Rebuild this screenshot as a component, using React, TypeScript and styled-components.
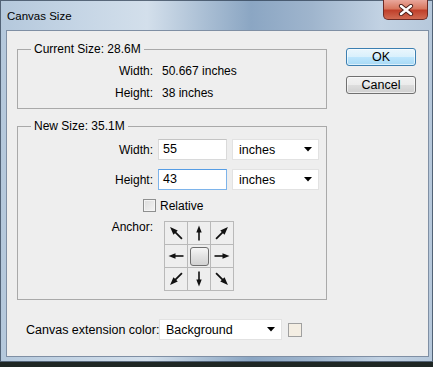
import * as React from 'react';
import styled, { createGlobalStyle } from 'styled-components';

const GlobalStyle = createGlobalStyle`
  html, body {
    margin: 0;
    padding: 0;
    background: #1f2724;
  }
  body {
    font-family: 'Liberation Sans', Arial, sans-serif;
    font-size: 12px;
    color: #000000;
  }
`;

const Window = styled.div`
  width: 433px;
  height: 362px;
  box-sizing: border-box;
  display: flex;
  flex-direction: column;
  background: linear-gradient(
    90deg,
    #b4c8dc 0%,
    #c5d5e5 18%,
    #d3dfeb 34%,
    #a8bdd3 48%,
    #8ba6c3 58%,
    #9fb5cd 72%,
    #c2d2e3 88%,
    #b6c8db 100%
  );
  box-shadow: inset 0 0 0 1px rgba(40, 55, 75, 0.7);
`;

const TitleBar = styled.div`
  height: 30px;
  display: flex;
  justify-content: space-between;
  align-items: flex-start;
`;

const Title = styled.div`
  padding: 9px 0 0 7px;
  font-size: 11.5px;
  line-height: 14px;
  color: #000000;
`;

const CloseButton = styled.div`
  width: 45px;
  height: 20px;
  margin-right: 5px;
  box-sizing: border-box;
  border: 1px solid #6d2a25;
  border-top: none;
  border-radius: 0 0 5px 5px;
  background: linear-gradient(180deg, #e9a79c 0%, #d8775f 45%, #c0402b 55%, #d06a52 100%);
  display: flex;
  align-items: center;
  justify-content: center;
`;

const Client = styled.div`
  flex: 1;
  margin: 0 4px 5px 6px;
  border: 1px solid #7f8fa4;
  background: #eeeeee;
  padding: 11px 0 0 10px;
  display: flex;
  flex-direction: column;
`;

const TopArea = styled.div`
  display: flex;
  align-items: flex-start;
`;

const LeftColumn = styled.div`
  width: 310px;
  display: flex;
  flex-direction: column;
`;

const RightColumn = styled.div`
  margin: 6px 0 0 19px;
  display: flex;
  flex-direction: column;
  gap: 10px;
`;

const Group = styled.fieldset<{ $gap?: number }>`
  margin: ${(p) => p.$gap ?? 0}px 0 0 0;
  padding: 0;
  min-width: 0;
  border: 1px solid #a9a9a9;
`;

const Legend = styled.legend`
  margin-left: 13px;
  padding: 0 3px;
  line-height: 14px;
  font-size: 12px;
`;

const InfoGrid = styled.div`
  display: grid;
  grid-template-columns: 135px auto;
  column-gap: 9px;
  padding: 4px 0;
  line-height: 22px;
`;

const Label = styled.div`
  text-align: right;
  white-space: nowrap;
`;

const FormGrid = styled.div`
  display: grid;
  grid-template-columns: 135px auto;
  column-gap: 5px;
  row-gap: 9px;
  padding: 6px 0 8px 0;
  align-items: center;
`;

const FieldRow = styled.div`
  display: flex;
  gap: 5px;
`;

const TextInput = styled.div<{ $focused?: boolean }>`
  width: 69px;
  height: 21px;
  box-sizing: border-box;
  background: #ffffff;
  border: 1px solid ${(p) => (p.$focused ? '#7eb4ea' : '#dadada')};
  border-top-color: ${(p) => (p.$focused ? '#569de5' : '#c4c4c4')};
  padding: 0 4px;
  line-height: 19px;
  font-size: 12.5px;
`;

const Select = styled.div<{ $width: number }>`
  width: ${(p) => p.$width}px;
  height: 21px;
  box-sizing: border-box;
  background: #ffffff;
  border: 1px solid #e2e2e2;
  padding: 0 6px 0 6px;
  display: flex;
  align-items: center;
  justify-content: space-between;
  font-size: 12.5px;
`;

const CheckRow = styled.label`
  grid-column: 1 / -1;
  padding-left: 125px;
  display: flex;
  align-items: center;
  gap: 4px;
  height: 13px;
`;

const CheckBox = styled.span`
  width: 13px;
  height: 13px;
  box-sizing: border-box;
  border: 1px solid #8e8f8f;
  background: linear-gradient(135deg, #dcdcdc 0%, #f4f4f4 100%);
  box-shadow: inset 0 0 0 1px #f4f4f4;
`;

const AnchorLabel = styled(Label)`
  align-self: start;
  line-height: 12px;
`;

const AnchorGrid = styled.div`
  margin-left: 6px;
  display: grid;
  grid-template-columns: repeat(3, 22px);
  grid-template-rows: repeat(3, 22px);
  gap: 1px;
  width: max-content;
  background: #b9b9b9;
  border: 1px solid #b9b9b9;
`;

const AnchorCell = styled.div`
  background: #eeeeee;
  display: flex;
  align-items: center;
  justify-content: center;
`;

const AnchorCenter = styled.div`
  width: 19px;
  height: 19px;
  box-sizing: border-box;
  border: 1px solid #6e6e6e;
  border-radius: 3px;
  background: linear-gradient(180deg, #f6f6f6 0%, #e2e2e2 50%, #d2d2d2 100%);
`;

const Button = styled.div<{ $primary?: boolean }>`
  width: 70px;
  height: 18px;
  box-sizing: border-box;
  border: 1px solid ${(p) => (p.$primary ? '#3c7fb1' : '#707070')};
  border-radius: 3px;
  background: ${(p) =>
    p.$primary
      ? 'linear-gradient(180deg, #eaf6fd 0%, #d9f0fc 50%, #bee6fd 51%, #a7d9f5 100%)'
      : 'linear-gradient(180deg, #f2f2f2 0%, #ebebeb 50%, #dddddd 51%, #cfcfcf 100%)'};
  box-shadow: inset 0 0 0 1px rgba(255, 255, 255, 0.6);
  display: flex;
  align-items: center;
  justify-content: center;
  font-size: 12.5px;
`;

const BottomRow = styled.div`
  margin-top: 19px;
  padding-left: 9px;
  display: flex;
  align-items: center;
`;

const BottomLabel = styled.div`
  width: 133px;
  white-space: nowrap;
  font-size: 12.5px;
`;

const Swatch = styled.div`
  width: 14px;
  height: 14px;
  margin-left: 6px;
  box-sizing: border-box;
  border: 1px solid #a0a0a0;
  background: #f4eee3;
`;

const DropArrow = () => (
  <svg width="8" height="5" viewBox="0 0 8 5">
    <polygon points="0,0 8,0 4,4.5" fill="#000" />
  </svg>
);

const CloseGlyph = () => (
  <svg width="16" height="12" viewBox="0 0 16 12">
    <path d="M3 2 L13 10 M13 2 L3 10" stroke="#4a1d18" strokeWidth="4.2" strokeLinecap="round" />
    <path d="M3 2 L13 10 M13 2 L3 10" stroke="#ffffff" strokeWidth="2.4" strokeLinecap="round" />
  </svg>
);

const Arrow = ({ angle }: { angle: number }) => {
  const diag = angle % 90 !== 0;
  const s = diag ? 1.12 : 1;
  return (
    <svg width="22" height="22" viewBox="0 0 22 22">
      <g transform={`rotate(${angle} 11 11) translate(11 11) scale(${s}) translate(-11 -11)`}>
        <line x1="3.5" y1="11" x2="13" y2="11" stroke="#111" strokeWidth="1.6" />
        <polygon points="18.5,11 11.5,8.3 11.5,13.7" fill="#111" />
      </g>
    </svg>
  );
};

const anchorAngles: (number | null)[] = [-135, -90, -45, 180, null, 0, 135, 90, 45];

export default function App() {
  return (
    <>
      <GlobalStyle />
      <Window>
        <TitleBar>
          <Title>Canvas Size</Title>
          <CloseButton>
            <CloseGlyph />
          </CloseButton>
        </TitleBar>
        <Client>
          <TopArea>
            <LeftColumn>
              <Group>
                <Legend>Current Size: 28.6M</Legend>
                <InfoGrid>
                  <Label>Width:</Label>
                  <div>50.667 inches</div>
                  <Label>Height:</Label>
                  <div>38 inches</div>
                </InfoGrid>
              </Group>
              <Group $gap={10}>
                <Legend>New Size: 35.1M</Legend>
                <FormGrid>
                  <Label>Width:</Label>
                  <FieldRow>
                    <TextInput>55</TextInput>
                    <Select $width={87}>
                      inches
                      <DropArrow />
                    </Select>
                  </FieldRow>
                  <Label>Height:</Label>
                  <FieldRow>
                    <TextInput $focused>43</TextInput>
                    <Select $width={87}>
                      inches
                      <DropArrow />
                    </Select>
                  </FieldRow>
                  <CheckRow>
                    <CheckBox />
                    Relative
                  </CheckRow>
                  <AnchorLabel>Anchor:</AnchorLabel>
                  <AnchorGrid>
                    {anchorAngles.map((a, i) => (
                      <AnchorCell key={i}>{a === null ? <AnchorCenter /> : <Arrow angle={a} />}</AnchorCell>
                    ))}
                  </AnchorGrid>
                </FormGrid>
              </Group>
            </LeftColumn>
            <RightColumn>
              <Button $primary>OK</Button>
              <Button>Cancel</Button>
            </RightColumn>
          </TopArea>
          <BottomRow>
            <BottomLabel>Canvas extension color:</BottomLabel>
            <Select $width={123}>
              Background
              <DropArrow />
            </Select>
            <Swatch />
          </BottomRow>
        </Client>
      </Window>
    </>
  );
}
